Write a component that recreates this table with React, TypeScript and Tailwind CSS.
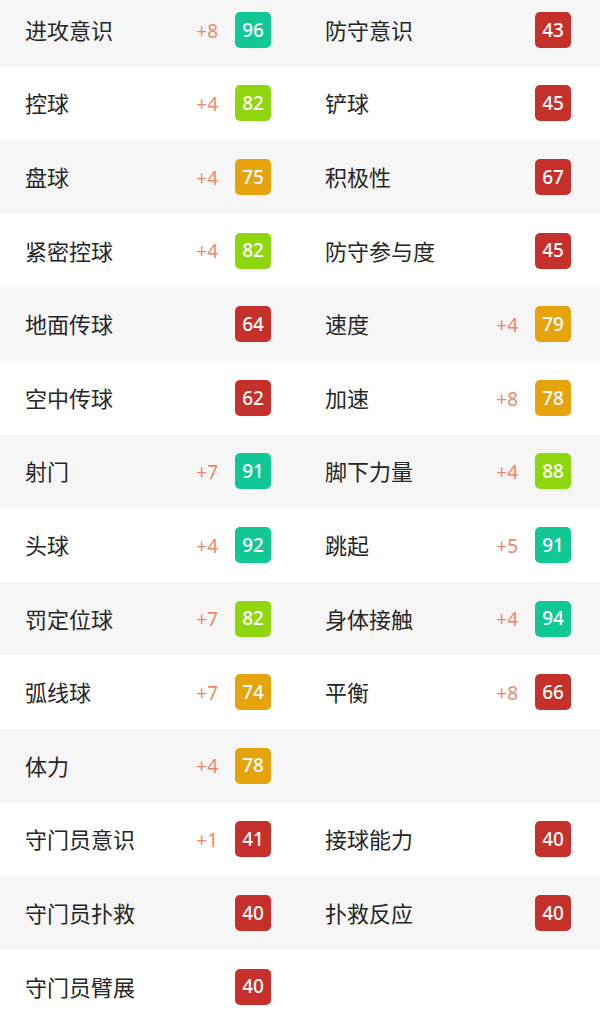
import React from 'react';

type Stat = { name: string; plus?: number; value: number };

const rows: [Stat, Stat | null][] = [
    [{ name: '进攻意识', plus: 8, value: 96 }, { name: '防守意识', value: 43 }],
    [{ name: '控球', plus: 4, value: 82 }, { name: '铲球', value: 45 }],
    [{ name: '盘球', plus: 4, value: 75 }, { name: '积极性', value: 67 }],
    [{ name: '紧密控球', plus: 4, value: 82 }, { name: '防守参与度', value: 45 }],
    [{ name: '地面传球', value: 64 }, { name: '速度', plus: 4, value: 79 }],
    [{ name: '空中传球', value: 62 }, { name: '加速', plus: 8, value: 78 }],
    [{ name: '射门', plus: 7, value: 91 }, { name: '脚下力量', plus: 4, value: 88 }],
    [{ name: '头球', plus: 4, value: 92 }, { name: '跳起', plus: 5, value: 91 }],
    [{ name: '罚定位球', plus: 7, value: 82 }, { name: '身体接触', plus: 4, value: 94 }],
    [{ name: '弧线球', plus: 7, value: 74 }, { name: '平衡', plus: 8, value: 66 }],
    [{ name: '体力', plus: 4, value: 78 }, null],
    [{ name: '守门员意识', plus: 1, value: 41 }, { name: '接球能力', value: 40 }],
    [{ name: '守门员扑救', value: 40 }, { name: '扑救反应', value: 40 }],
    [{ name: '守门员臂展', value: 40 }, null],
];

const badgeColor = (v: number) => {
    if (v >= 90) return 'bg-[#10c796]';
    if (v >= 80) return 'bg-[#8ed70e]';
    if (v >= 70) return 'bg-[#e6a30b]';
    return 'bg-[#c6302b]';
};

const Cell: React.FC<{ stat: Stat | null }> = ({ stat }) => {
    if (!stat) return <div />;
    return (
        <div className="flex items-center pl-[25px] pr-[29px]">
            <span className="flex-1 pt-[1px] text-[22px] text-[#262626]">{stat.name}</span>
            {stat.plus !== undefined && (
                <span className="mr-[17px] pt-[2px] text-[19px] text-[#ee8769]">+{stat.plus}</span>
            )}
            <span
                className={`flex h-[36px] w-[36px] items-center justify-center rounded-[5px] text-[19px] font-medium text-white ${badgeColor(stat.value)}`}
            >
                {stat.value}
            </span>
        </div>
    );
};

export default function App() {
    return (
        <div
            className="h-[1024px] w-[600px] overflow-hidden bg-white"
            style={{ fontFamily: '"Noto Sans", "Noto Sans CJK SC", sans-serif' }}
        >
            <div className="-mt-[7px]">
                {rows.map(([left, right], i) => (
                    <div
                        key={i}
                        className={`grid h-[73.6px] grid-cols-2 ${i % 2 === 0 ? 'bg-[#f6f6f6]' : 'bg-white'}`}
                    >
                        <Cell stat={left} />
                        <Cell stat={right} />
                    </div>
                ))}
            </div>
        </div>
    );
}
